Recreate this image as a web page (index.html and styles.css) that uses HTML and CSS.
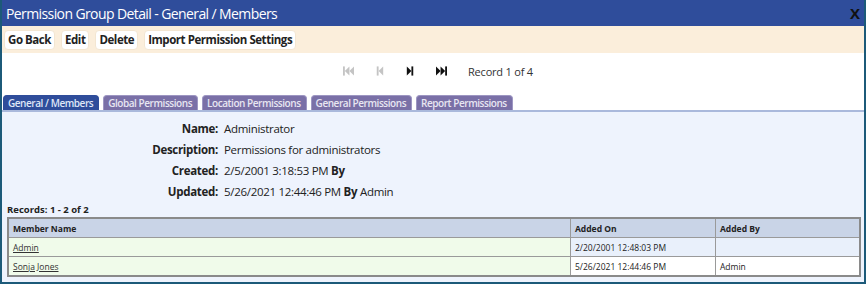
FILE: index.html
```html
<!DOCTYPE html>
<html lang="en">
<head>
  <meta charset="UTF-8">
  <title>Permission Group Detail</title>
  <link rel="stylesheet" href="styles.css">
</head>
<body>
  <div class="window">
    <div class="titlebar">
      <span class="title">Permission Group Detail - General / Members</span>
      <span class="close">X</span>
    </div>

    <div class="toolbar">
      <button class="tool-btn">Go Back</button>
      <button class="tool-btn">Edit</button>
      <button class="tool-btn">Delete</button>
      <button class="tool-btn">Import Permission Settings</button>
    </div>

    <!-- record navigation -->
    <div class="pager">
      <svg class="nav-icon disabled" viewBox="0 0 12 10"><rect x="0" y="0" width="2" height="10"/><polygon points="7,0 7,10 2,5"/><polygon points="12,0 12,10 7,5"/></svg>
      <svg class="nav-icon disabled" viewBox="0 0 12 10"><rect x="3" y="0" width="2" height="10"/><polygon points="10,0 10,10 5,5"/></svg>
      <svg class="nav-icon" viewBox="0 0 12 10"><polygon points="2,0 2,10 7,5"/><rect x="7" y="0" width="2" height="10"/></svg>
      <svg class="nav-icon" viewBox="0 0 12 10"><polygon points="0,0 0,10 5,5"/><polygon points="5,0 5,10 10,5"/><rect x="10" y="0" width="2" height="10"/></svg>
      <span class="record">Record 1 of 4</span>
    </div>

    <div class="tabs">
      <span class="tab active">General / Members</span>
      <span class="tab">Global Permissions</span>
      <span class="tab">Location Permissions</span>
      <span class="tab">General Permissions</span>
      <span class="tab">Report Permissions</span>
    </div>

    <div class="panel">
      <div class="fields">
        <div class="label">Name:</div><div class="value">Administrator</div>
        <div class="label">Description:</div><div class="value">Permissions for administrators</div>
        <div class="label">Created:</div><div class="value">2/5/2001 3:18:53 PM <b>By</b></div>
        <div class="label">Updated:</div><div class="value">5/26/2021 12:44:46 PM <b>By</b> Admin</div>
      </div>

      <div class="records">Records: 1 - 2 of 2</div>
      <table class="grid">
        <thead>
          <tr><th class="col-name">Member Name</th><th class="col-on">Added On</th><th>Added By</th></tr>
        </thead>
        <tbody>
          <tr class="odd"><td class="name"><a href="#">Admin</a></td><td>2/20/2001 12:48:03 PM</td><td></td></tr>
          <tr class="even"><td class="name"><a href="#">Sonja Jones</a></td><td>5/26/2021 12:44:46 PM</td><td>Admin</td></tr>
        </tbody>
      </table>
    </div>
  </div>
</body>
</html>
```

FILE: styles.css
```css
body {
  margin: 0;
  font-family: "Open Sans", "Liberation Sans", sans-serif;
  color: #222;
}
.window {
  width: 866px;
  height: 284px;
  box-sizing: border-box;
  border: 2px solid #1c5a79;
  border-top: 0;
  background-color: #fff;
  display: flex;
  flex-direction: column;
}
.titlebar {
  height: 26px;
  background-color: #2f4d9b;
  display: flex;
  align-items: center;
  justify-content: space-between;
  padding: 0 4px 0 4px;
  flex-shrink: 0;
}
.title {
  color: #fff;
  font-size: 14px;
  letter-spacing: -0.6px;
}
.close {
  color: #111;
  font-weight: bold;
  font-size: 15px;
}
.toolbar {
  height: 27px;
  background-color: #fbeedb;
  display: flex;
  align-items: center;
  gap: 6px;
  padding: 0 2px;
  flex-shrink: 0;
}
.tool-btn {
  font-family: inherit;
  font-size: 11.5px;
  font-weight: bold;
  letter-spacing: -0.45px;
  color: #222;
  background-color: #fff;
  border: 1px solid #f3e6d2;
  border-radius: 4px;
  padding: 1px 3px;
  height: 20px;
}
.pager {
  height: 36px;
  display: flex;
  align-items: center;
  padding-left: 341px;
  flex-shrink: 0;
}
.nav-icon {
  width: 11px;
  height: 10px;
  fill: #111;
  margin-right: 20px;
}
.nav-icon.disabled {
  fill: #c4c4c4;
}
.record {
  font-size: 11px;
  letter-spacing: -0.2px;
  color: #333;
  margin-left: 1px;
}
.tabs {
  display: flex;
  gap: 4px;
  padding: 6px 0 0 1px;
  flex-shrink: 0;
}
.tab {
  font-size: 10px;
  font-weight: 600;
  letter-spacing: -0.45px;
  color: #e8e6f2;
  background-color: #7a70a7;
  border: 1px solid #9d96c2;
  border-bottom: 0;
  border-radius: 4px 4px 0 0;
  padding: 0 5px 0 4px;
  height: 14px;
  line-height: 14px;
}
.tab.active {
  background-color: #2f4d9b;
  border-color: #2f4d9b;
  color: #dfe6f7;
}
.panel {
  flex: 1;
  background-color: #eef3fd;
  border-top: 2px solid #aab9dc;
  padding: 5px 3px 0 5px;
}
.fields {
  display: grid;
  grid-template-columns: 211px auto;
  column-gap: 6px;
  row-gap: 4px;
  font-size: 11.5px;
  letter-spacing: -0.3px;
  line-height: 17px;
  padding-top: 3px;
}
.label {
  text-align: right;
  font-weight: bold;
}
.records {
  font-size: 9.5px;
  font-weight: bold;
  margin-top: 3px;
}
.grid {
  width: 100%;
  border-collapse: collapse;
  border: 2px solid #8a8a8a;
  font-size: 8.5px;
  margin-top: 1px;
}
.grid th, .grid td {
  text-align: left;
  border: 1px solid #9a9a9a;
  padding: 0 4px;
  height: 18px;
}
.grid th {
  background-color: #c9d4e7;
  font-weight: bold;
}
.col-name {
  width: 553px;
}
.col-on {
  width: 136px;
}
.odd td {
  background-color: #e9f0fb;
}
.even td {
  background-color: #fff;
}
.grid td.name {
  background-color: #f0fbea;
}
.grid a {
  color: #333;
}
```
